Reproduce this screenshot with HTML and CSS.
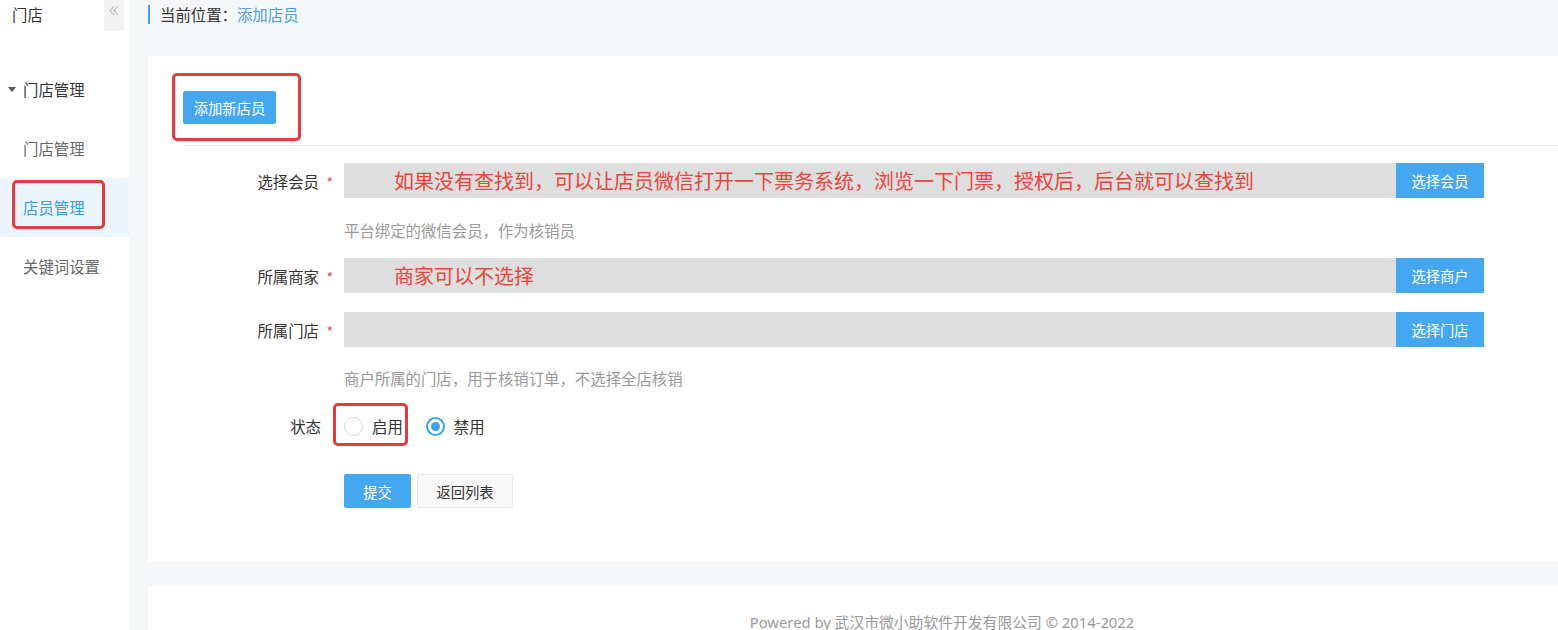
FILE: index.html
```html
<!DOCTYPE html>
<html lang="zh-CN">
<head>
<meta charset="utf-8">
<title>添加店员</title>
<link rel="stylesheet" href="styles.css">
</head>
<body>
<div class="app">
  <aside class="sidebar">
    <div class="side-head">
      <span class="side-title">门店</span>
      <span class="collapse"><svg width="10" height="11" viewBox="0 0 10 11"><polyline points="5,1 1,5.5 5,10" fill="none" stroke="#b5b5b5" stroke-width="1.1"/><polyline points="9,1 5,5.5 9,10" fill="none" stroke="#b5b5b5" stroke-width="1.1"/></svg></span>
    </div>
    <nav class="menu">
      <div class="menu-group"><span class="caret"></span>门店管理</div>
      <div class="menu-item">门店管理</div>
      <div class="menu-item active">店员管理<span class="mark mark-side"></span></div>
      <div class="menu-item">关键词设置</div>
    </nav>
  </aside>
  <main class="main">
    <div class="crumb">当前位置：<span class="crumb-link">添加店员</span></div>
    <section class="card">
      <div class="card-top">
        <span class="btn-wrap"><button class="btn btn-primary btn-add">添加新店员</button><span class="mark mark-add"></span></span>
      </div>
      <div class="form">
        <div class="row">
          <label class="label">选择会员<span class="star">*</span></label>
          <div class="field">
            <div class="input"><span class="note">如果没有查找到，可以让店员微信打开一下票务系统，浏览一下门票，授权后，后台就可以查找到</span></div>
            <button class="btn btn-primary btn-pick">选择会员</button>
          </div>
        </div>
        <div class="help help-1">平台绑定的微信会员，作为核销员</div>
        <div class="row row-2">
          <label class="label">所属商家<span class="star">*</span></label>
          <div class="field">
            <div class="input"><span class="note">商家可以不选择</span></div>
            <button class="btn btn-primary btn-pick">选择商户</button>
          </div>
        </div>
        <div class="row row-3">
          <label class="label">所属门店<span class="star">*</span></label>
          <div class="field">
            <div class="input"></div>
            <button class="btn btn-primary btn-pick">选择门店</button>
          </div>
        </div>
        <div class="help help-2">商户所属的门店，用于核销订单，不选择全店核销</div>
        <div class="row row-status">
          <label class="label label-plain">状态</label>
          <div class="radios">
            <span class="radio-opt"><span class="radio"></span>启用<span class="mark mark-radio"></span></span>
            <span class="radio-opt"><span class="radio checked"></span>禁用</span>
          </div>
        </div>
        <div class="actions">
          <button class="btn btn-primary btn-submit">提交</button>
          <button class="btn btn-default">返回列表</button>
        </div>
      </div>
    </section>
    <footer class="footer">Powered by 武汉市微小助软件开发有限公司 © 2014-2022</footer>
  </main>
</div>
</body>
</html>
```
FILE: styles.css
```css
html, body {
  margin: 0;
  padding: 0;
  overflow: hidden;
  height: 630px;
}
body {
  font-family: "Noto Sans CJK SC", "Noto Sans", sans-serif;
  font-size: 15.4px;
  color: #333;
  background: #f5f6f8;
}
.app {
  display: flex;
  width: 1760px;
  height: 630px;
}
.sidebar {
  width: 129px;
  flex: none;
  background: #fff;
  height: 630px;
}
.side-head {
  display: flex;
  justify-content: space-between;
  height: 60px;
}
.side-title {
  padding-left: 12px;
  line-height: 29px;
  color: #333;
}
.collapse {
  width: 20px;
  height: 31px;
  margin-right: 5px;
  background: #f2f3f5;
  display: flex;
  justify-content: center;
  align-items: flex-start;
  padding-top: 5px;
  box-sizing: border-box;
}
.menu-group, .menu-item {
  position: relative;
  height: 59px;
  line-height: 59px;
  padding-left: 23px;
  color: #666;
}
.menu-group {
  color: #333;
}
.caret {
  position: absolute;
  left: 8px;
  top: 27px;
  width: 0;
  height: 0;
  border-left: 4px solid transparent;
  border-right: 4px solid transparent;
  border-top: 5px solid #555;
}
.menu-item.active {
  background: #ecf5fd;
  color: #3a9be5;
}
.mark {
  position: absolute;
  border: 3px solid #e63b3e;
  border-radius: 5px;
  box-sizing: border-box;
  pointer-events: none;
}
.mark-side {
  left: 12px;
  top: 2px;
  width: 93px;
  height: 49px;
}
.main {
  flex: none;
  padding-left: 19px;
  width: 1588px;
}
.crumb {
  margin-top: 5px;
  height: 19px;
  line-height: 19px;
  border-left: 2px solid #4aa3e6;
  padding-left: 10px;
  color: #333;
}
.crumb-link {
  color: #4a9fdf;
}
.card {
  margin-top: 32px;
  background: #fff;
  height: 506px;
}
.card-top {
  margin-left: 35px;
  padding-top: 35px;
  padding-bottom: 21px;
  border-bottom: 1px solid #ebebeb;
}
.btn-wrap {
  position: relative;
  display: inline-block;
  vertical-align: top;
}
.mark-add {
  left: -11px;
  top: -18px;
  width: 129px;
  height: 68px;
}
.btn {
  font-family: "Noto Sans CJK SC", "Noto Sans", sans-serif;
  font-size: 14.3px;
  border: none;
  padding: 0;
  margin: 0;
  cursor: pointer;
  display: block;
}
.btn-primary {
  background: #46a7f1;
  color: #fff;
}
.btn-add {
  width: 93px;
  height: 33px;
  border-radius: 2px;
}
.form {
  padding-top: 17px;
}
.row {
  display: flex;
  align-items: center;
  height: 35px;
}
.label {
  width: 196px;
  flex: none;
  box-sizing: border-box;
  padding-right: 11px;
  text-align: right;
  color: #333;
}
.label-plain {
  padding-right: 23px;
}
.star {
  display: inline-block;
  width: 14px;
  text-align: right;
  color: #e5484d;
  font-size: 14px;
}
.field {
  display: flex;
  height: 35px;
}
.input {
  width: 1052px;
  height: 35px;
  background: #dedede;
  box-sizing: border-box;
  padding-left: 50px;
  display: flex;
  align-items: center;
}
.note {
  color: #e8453c;
  font-size: 20px;
  line-height: 24px;
}
.btn-pick {
  width: 88px;
  height: 35px;
}
.help {
  margin-left: 196px;
  color: #999;
  line-height: 22px;
}
.help-1 {
  margin-top: 21px;
}
.row-2 {
  margin-top: 17px;
}
.row-3 {
  margin-top: 19px;
}
.help-2 {
  margin-top: 20px;
}
.row-status {
  margin-top: 26px;
  height: 22px;
}
.radios {
  display: flex;
  align-items: center;
  gap: 23px;
}
.radio-opt {
  position: relative;
  display: flex;
  align-items: center;
  color: #333;
  line-height: 22px;
}
.radio {
  width: 19px;
  height: 19px;
  box-sizing: border-box;
  border: 1px solid #d9d9d9;
  border-radius: 50%;
  margin-right: 9px;
  background: #fff;
  display: flex;
  align-items: center;
  justify-content: center;
}
.radio.checked {
  border: 2px solid #3da2ee;
}
.radio.checked::after {
  content: "";
  width: 9px;
  height: 9px;
  border-radius: 50%;
  background: #3da2ee;
}
.mark-radio {
  left: -11px;
  top: -12px;
  width: 75px;
  height: 43px;
}
.actions {
  display: flex;
  gap: 6px;
  margin-top: 37px;
  margin-left: 196px;
}
.btn-submit {
  width: 67px;
  height: 34px;
  border-radius: 2px;
}
.btn-default {
  width: 96px;
  height: 34px;
  background: #f9f9f9;
  border: 1px solid #e6e6e6;
  color: #333;
  box-sizing: border-box;
  border-radius: 2px;
}
.footer {
  margin-top: 24px;
  background: #fff;
  height: 60px;
  box-sizing: border-box;
  padding-top: 25px;
  line-height: 22px;
  text-align: center;
  color: #999;
  font-size: 14.8px;
  font-family: "Noto Sans", "Noto Sans CJK SC", sans-serif;
}
```
